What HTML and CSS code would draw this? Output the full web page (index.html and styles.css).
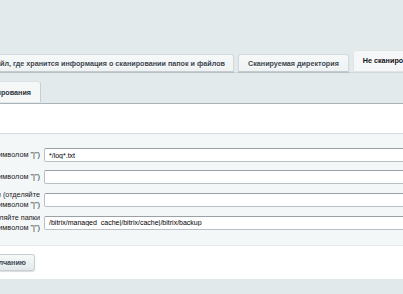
FILE: index.html
```html
<!DOCTYPE html>
<html lang="ru">

<head>
    <meta charset="UTF-8">
    <meta name="viewport" content="width=device-width, initial-scale=1.0">
    <title>Сканер файлов</title>
    <link rel="stylesheet" href="styles.css">
</head>

<body>
    <div class="header">
        <div class="tabs">
            <div class="tab tab-first"><span>Файл, где хранится информация о сканировании папок и файлов</span></div>
            <div class="tab">Сканируемая директория</div>
            <div class="tab active">Не сканировать</div>
        </div>
        <div class="subtabs">
            <div class="subtab"><span>Параметры сканирования</span></div>
        </div>
    </div>

    <div class="content">
        <div class="form">
            <div class="row">
                <div class="label"><span>Маски исключаемых файлов (разделяйте символом "|")</span></div>
                <input class="field" type="text" value="*/log*.txt">
            </div>
            <div class="row">
                <div class="label"><span>Маски исключаемых папок (разделяйте символом "|")</span></div>
                <input class="field" type="text" value="">
            </div>
            <div class="row tall">
                <div class="label">
                    <span>Исключить файлы с расширениями (отделяйте</span>
                    <span>символом "|")</span>
                </div>
                <input class="field" type="text" value="">
            </div>
            <div class="row tall">
                <div class="label">
                    <span>Пропускаемые директории (отделяйте папки</span>
                    <span>символом "|")</span>
                </div>
                <input class="field" type="text" value="/bitrix/managed_cache|/bitrix/cache|/bitrix/backup">
            </div>
        </div>

        <div class="buttons">
            <button class="btn" type="button"><span>По умолчанию</span></button>
        </div>
    </div>

    <div class="footer"></div>
</body>

</html>
```

FILE: styles.css
```css
body {
    margin: 0;
    font-family: "Liberation Sans", Arial, sans-serif;
    font-size: 7.3px;
    color: #222;
    background-color: #fff;
    overflow: hidden;
}

.header {
    background-color: #e3eaec;
    padding-top: 50px;
}

.tabs {
    display: flex;
    align-items: flex-end;
    gap: 4px;
    height: 22px;
}

.tab {
    box-sizing: border-box;
    height: 18px;
    padding: 0 9px;
    display: flex;
    align-items: center;
    background: linear-gradient(#f7f9f9, #eef2f3);
    border: 1px solid #d3dadc;
    border-bottom: 1px solid #c3cbce;
    border-radius: 3px 3px 0 0;
    box-shadow: 0 1px 1px rgba(0, 0, 0, 0.12);
    white-space: nowrap;
    font-size: 7.2px;
    font-weight: bold;
    color: #3a454d;
    text-shadow: 0 1px #fff;
    flex: none;
}

.tab-first {
    width: 234px;
    border-left: none;
    border-radius: 0 3px 0 0;
    justify-content: flex-end;
    overflow: hidden;
    padding-right: 8px;
}

.tab.active {
    height: 22px;
    padding-bottom: 2px;
    background: #f5f7f8;
    border-color: #dfe5e7;
    box-shadow: none;
    color: #111;
}

.subtabs {
    height: 32px;
    box-sizing: border-box;
    border-top: 1px solid #d0d8db;
    border-bottom: 1px solid #a9b2b6;
    padding-top: 8px;
}

.subtab {
    box-sizing: border-box;
    width: 41px;
    height: 21px;
    display: flex;
    align-items: center;
    justify-content: flex-end;
    overflow: hidden;
    padding-right: 9px;
    white-space: nowrap;
    font-size: 7.2px;
    font-weight: bold;
    background-color: #f6f8f8;
    border-top: 1px solid #dde3e5;
    border-right: 1px solid #c6ced1;
    border-radius: 0 3px 0 0;
    color: #2b3338;
}

.content {
    padding-top: 29px;
}

.form {
    background-color: #f4f7f8;
    border-top: 1px solid #d6dde0;
    border-bottom: 1px solid #e6ebed;
    padding: 10px 0 11px;
}

.row {
    display: flex;
    align-items: center;
    gap: 4px;
    height: 22px;
}

.row.tall {
    height: 23px;
}

.label {
    width: 40px;
    flex: none;
    display: flex;
    flex-direction: column;
    align-items: flex-end;
    overflow: hidden;
    line-height: 10px;
    color: #222;
}

.label span {
    white-space: nowrap;
}

.field {
    box-sizing: border-box;
    flex: none;
    width: 420px;
    height: 14px;
    margin: 0;
    padding: 0 4px;
    font-family: inherit;
    font-size: 7px;
    line-height: 12px;
    color: #000;
    background-color: #fff;
    border: 1px solid #b9c0c3;
    border-top-color: #9aa2a6;
    border-radius: 2px;
}

.buttons {
    padding: 8px 0;
}

.btn {
    box-sizing: border-box;
    width: 35px;
    height: 17px;
    display: flex;
    align-items: center;
    justify-content: flex-end;
    overflow: hidden;
    padding: 0 8px 0 0;
    font-family: inherit;
    font-size: 7.2px;
    font-weight: bold;
    color: #3f4b54;
    white-space: nowrap;
    background: linear-gradient(#f7f9f9, #e3e9ea);
    border: 1px solid #c7cfd2;
    border-left: none;
    border-radius: 0 3px 3px 0;
    box-shadow: 0 1px 1px rgba(0, 0, 0, 0.15);
}

.footer {
    height: 16px;
    background-color: #e2e9eb;
}
```
